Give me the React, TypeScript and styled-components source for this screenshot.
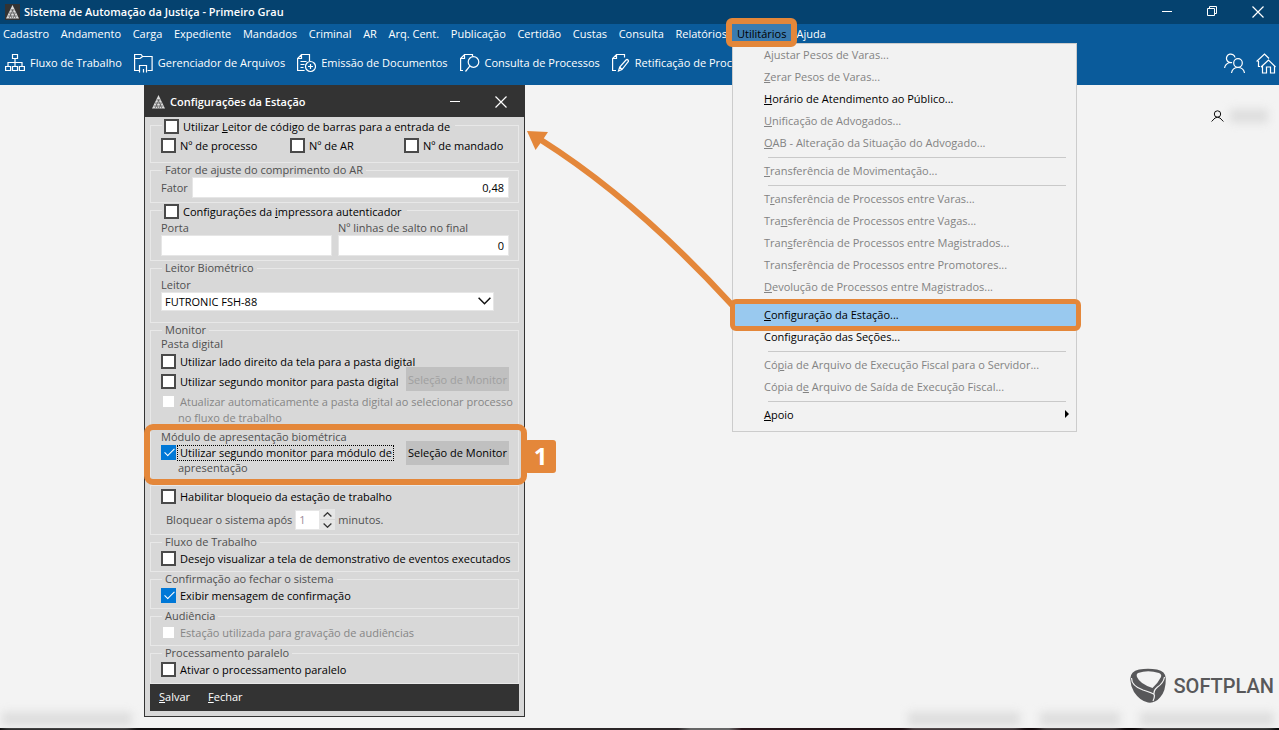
import React from "react";
import styled, { createGlobalStyle, css } from "styled-components";

const orange = "#e4873a";
const uiFont = '"Open Sans", "Noto Sans", "Liberation Sans", sans-serif';

const GlobalStyle = createGlobalStyle`
  *, *::before, *::after { box-sizing: border-box; }
  body { margin: 0; background: #f3f3f3; }
  body, button, input, select { font-family: ${uiFont}; font-size: 11px; }
`;

const Page = styled.div`
  position: relative;
  display: flex;
  flex-direction: column;
  min-height: 100vh;
  overflow: hidden;
`;

const TitleBar = styled.header`
  display: flex;
  align-items: center;
  height: 24px;
  padding: 0 15px 0 5px;
  background: #05426f;
  color: #fff;
`;

const AppTitle = styled.h1`
  flex: 1;
  margin: 0 0 0 4px;
  font-size: 11px;
  font-weight: 600;
  line-height: 16px;
`;

const WindowControls = styled.div`
  display: flex;
  align-items: center;
  gap: 35px;
`;

const IconButton = styled.button`
  display: flex;
  align-items: center;
  justify-content: center;
  padding: 0;
  border: 0;
  background: none;
  color: inherit;
`;

const MenuBar = styled.nav`
  display: flex;
  gap: 10px;
  height: 20px;
  padding-left: 3px;
  background: #0a5b9b;
`;

const MenuGroup = styled.div`
  display: flex;
  justify-content: space-between;
  width: 724px;
`;

const MenuEntry = styled.div`
  position: relative;
  display: flex;
`;

const MenuButton = styled.button<{ $open?: boolean }>`
  padding: 0;
  border: 0;
  background: none;
  color: ${(p) => (p.$open ? "#000" : "#fff")};
  line-height: 18px;
  white-space: nowrap;
`;

const OpenMark = styled.span`
  position: absolute;
  z-index: 3;
  inset: -6px -11px -3px;
  border: 6px solid ${orange};
  border-radius: 6px;
  pointer-events: none;
`;

const OpenFill = styled.span`
  position: absolute;
  inset: 0 -5px;
  background: #3b7cb0;
`;

const MenuLabel = styled.span`
  position: relative;
`;

const Toolbar = styled.div`
  display: flex;
  align-items: center;
  height: 41px;
  padding: 0 3px 3px 5px;
  background: #0a5b9b;
  color: #fff;
`;

const ToolButton = styled.button`
  display: flex;
  align-items: center;
  gap: 5px;
  margin-right: 12px;
  padding: 0;
  border: 0;
  background: none;
  color: inherit;
  line-height: 14px;
  white-space: nowrap;
`;

const ToolbarEnd = styled.div`
  display: flex;
  gap: 11px;
  margin-left: auto;
`;

const Dropdown = styled.ul`
  position: absolute;
  z-index: 2;
  top: 19px;
  left: -5px;
  width: 345px;
  margin: 0;
  padding: 0 0 5px;
  border: 1px solid #ccc;
  background: #f2f2f2;
  list-style: none;
`;

const DropdownItem = styled.li`
  position: relative;
`;

const DropdownButton = styled.button<{ $active?: boolean }>`
  display: flex;
  align-items: center;
  justify-content: space-between;
  width: 100%;
  height: 22px;
  padding: 0 7px 2px 31px;
  border: 0;
  background: ${(p) => (p.$active ? "#99c9ef" : "none")};
  color: #000;
  white-space: nowrap;
  &:disabled { color: #838383; }
`;

const ActiveFrame = styled.span`
  position: absolute;
  z-index: 1;
  inset: -5px -5px -5px -3px;
  border: 5px solid ${orange};
  border-radius: 6px;
  pointer-events: none;
`;

const Separator = styled.li`
  height: 6px;
  padding: 3px 10px 0 35px;
  &::before { content: ""; display: block; height: 1px; background: #c9c9c9; }
`;

const Desktop = styled.main`
  display: flex;
  flex: 1;
  align-items: flex-start;
  justify-content: space-between;
  padding: 0 5px 11px 144px;
`;

const Dialog = styled.section`
  width: 381px;
  border: 1px solid #333;
  border-top: 0;
  background: #d8d8d8;
  color: #000;
`;

const DialogTitle = styled.header`
  display: flex;
  align-items: center;
  height: 32px;
  padding: 1px 17px 0 6px;
  background: #333;
  color: #fff;
`;

const DialogHeading = styled.h2`
  flex: 1;
  margin: 0 0 0 4px;
  font-size: 11px;
  font-weight: 600;
  line-height: 16px;
`;

const DialogBody = styled.form`
  padding: 1px 5px 5px;
`;

const Group = styled.fieldset<{ $bottom: number; $gap?: number }>`
  min-width: 0;
  margin: ${(p) => p.$gap ?? 0}px 0 0;
  padding: 0 9px ${(p) => p.$bottom}px 10px;
  border: 1px solid #e8e8e8;
`;

const Legend = styled.legend`
  height: 14px;
  margin-left: 1px;
  padding: 0 3px;
  color: #4f4f4f;
  line-height: 14px;
`;

const CheckLegend = styled(Legend)`
  padding: 1px 5px 0 2px;
  color: #000;
`;

const CheckLabel = styled.label<{ $off?: boolean }>`
  display: flex;
  align-items: center;
  gap: 4px;
  color: ${(p) => (p.$off ? "#868686" : "#000")};
  line-height: 15px;
  white-space: nowrap;
`;

const CheckBox = styled.input.attrs({ type: "checkbox" })`
  position: relative;
  flex: none;
  width: 15px;
  height: 15px;
  margin: 0;
  appearance: none;
  border: 2px solid #4a4a4a;
  background: #fff;
  &:checked { border-color: #0078d7; background: #0078d7; }
  &:checked::after {
    content: "";
    position: absolute;
    left: 4px;
    top: -1px;
    width: 5px;
    height: 10px;
    border: solid #fff;
    border-width: 0 1px 1px 0;
    transform: rotate(45deg);
  }
  &:disabled { border-color: transparent; background-clip: padding-box; }
`;

const Row = styled.div<{ $height?: number }>`
  display: flex;
  align-items: center;
  justify-content: space-between;
  height: ${(p) => p.$height ?? 20}px;
`;

const NumberChecks = styled.div`
  display: grid;
  grid-template-columns: 129px 114px 1fr;
  padding-top: 6px;
`;

const FieldLabel = styled.label`
  color: #4f4f4f;
  line-height: 14px;
  white-space: nowrap;
`;

const fieldBox = css`
  min-width: 0;
  margin: 0;
  border: 1px solid #e6e6e6;
  border-radius: 0;
  background: #fff;
  color: #000;
`;

const TextField = styled.input.attrs({ type: "text" })`
  ${fieldBox}
  height: 21px;
  padding: 0 4px;
  text-align: right;
`;

const FactorRow = styled.div`
  display: grid;
  grid-template-columns: 31px 1fr;
  align-items: center;
`;

const PrinterFields = styled.div`
  display: grid;
  grid-template-columns: 171px 171px;
  justify-content: space-between;
  padding-top: 4px;
`;

const Stack = styled.div`
  display: flex;
  flex-direction: column;
`;

const ReaderField = styled(Stack)`
  position: relative;
  width: 333px;
  padding-top: 3px;
`;

const ReaderSelect = styled.select`
  ${fieldBox}
  height: 19px;
  padding: 0 3px;
  appearance: none;
`;

const SelectArrow = styled.svg`
  position: absolute;
  right: 3px;
  bottom: 6px;
  pointer-events: none;
`;

const SubHeading = styled.h3`
  margin: 0;
  color: #4f4f4f;
  font-size: 11px;
  font-weight: 400;
  line-height: 14px;
`;

const Note = styled.p<{ $off?: boolean }>`
  margin: 0;
  padding-left: 17px;
  color: ${(p) => (p.$off ? "#868686" : "#4f4f4f")};
  line-height: 14px;
`;

const MonitorButton = styled.button<{ $align?: string }>`
  flex: none;
  align-self: ${(p) => p.$align ?? "flex-end"};
  width: 103px;
  height: 24px;
  padding: 0;
  border: 0;
  background: #c0c0c0;
  color: #000;
  white-space: nowrap;
  &:disabled { color: #9f9f9f; }
`;

const PresentationModule = styled.div`
  position: relative;
  margin-top: 5px;
`;

const StepFrame = styled.span`
  position: absolute;
  inset: -6px -18px -10px -17px;
  border: 6px solid ${orange};
  border-radius: 9px;
  pointer-events: none;
`;

const StepBadge = styled.span`
  position: absolute;
  top: 10px;
  left: 364px;
  width: 31px;
  height: 33px;
  border-radius: 3px;
  background: ${orange};
  color: #fff;
  font-size: 24px;
  font-weight: 700;
  line-height: 32px;
  text-align: center;
`;

const FocusText = styled.span`
  margin-left: -2px;
  padding: 0 1px 0 2px;
  outline: 1px dotted #000;
  line-height: 14px;
`;

const LockRow = styled.div`
  display: flex;
  align-items: center;
  gap: 3px;
  padding: 3px 5px 0;
  color: #4f4f4f;
`;

const MinutesField = styled.input.attrs({ type: "text" })`
  ${fieldBox}
  width: 25px;
  height: 20px;
  padding: 0 3px;
  color: #9a8a9a;
`;

const Spinner = styled.div`
  display: flex;
  flex-direction: column;
  gap: 1px;
  margin-left: -3px;
`;

const SpinButton = styled.button`
  display: flex;
  align-items: center;
  justify-content: center;
  width: 15px;
  height: 10px;
  padding: 0;
  border: 0;
  background: #e6e6e6;
`;

const DialogFooter = styled.footer`
  display: flex;
  gap: 18px;
  height: 27px;
  padding: 0 9px 3px;
  background: #333;
  color: #fff;
`;

const FooterButton = styled.button`
  padding: 0;
  border: 0;
  background: none;
  color: inherit;
`;

const SideColumn = styled.aside`
  display: flex;
  flex-direction: column;
  align-items: flex-end;
  align-self: stretch;
  justify-content: space-between;
  padding-top: 24px;
`;

const UserInfo = styled.div`
  display: flex;
  align-items: center;
  gap: 6px;
  margin-right: 6px;
`;

const Smudge = styled.span<{ $width: number }>`
  width: ${(p) => p.$width}px;
  height: 14px;
  background: #dedede;
  filter: blur(4px);
`;

const Brand = styled.div`
  display: flex;
  align-items: center;
  gap: 8px;
  margin-bottom: 13px;
  color: #58585a;
`;

const BrandName = styled.span`
  font-family: Roboto, "Liberation Sans", sans-serif;
  font-size: 20px;
  font-weight: 500;
  line-height: 36px;
`;

const StatusBar = styled.div`
  position: absolute;
  right: 5px;
  bottom: 4px;
  left: 2px;
  display: flex;
  gap: 20px;
`;

const StatusSpacer = styled.span`
  flex: 1;
`;

const TaskStrip = styled.div`
  height: 2px;
  background: linear-gradient(90deg, #000, #2b2628 30%, #2b2628 53%, #666 54%, #666 57%, #2a161b 58%, #000);
`;

const ArrowOverlay = styled.svg`
  position: absolute;
  top: 125px;
  left: 520px;
  pointer-events: none;
`;

/* Renders a label whose access key, the letter after "&", is underlined. */
function Mnemonic({ text }: { text: string }) {
  const at = text.indexOf("&");
  if (at < 0) return <span>{text}</span>;
  return (
    <span>
      {text.slice(0, at)}
      <u>{text[at + 1]}</u>
      {text.slice(at + 2)}
    </span>
  );
}

function JusticeMark() {
  return (
    <svg width="15" height="16" viewBox="0 0 15 16">
      <rect width="15" height="16" fill="#333" />
      <path d="M7.5 1L14 14.500H1z" fill="#dedede" />
      <path d="M2.500 12h10M4 9h7M5.500 6h4M4 14.500l4-9M8 14.500l2-5M11 14.500L7 5.500M7 14.500l-2-5" stroke="#555" strokeWidth=".7" fill="none" />
    </svg>
  );
}

const line = { fill: "none", stroke: "currentColor", strokeWidth: 1.2 };

const Minimize = () => (
  <svg width="10" height="10" {...line} strokeWidth={1}><path d="M0 4.500h10" /></svg>
);
const Restore = () => (
  <svg width="10" height="16" {...line} strokeWidth={1}><path d="M.5 4.500h7v7h-7zM2.500 4.500v-2h7v7h-2" /></svg>
);
const Close = () => (
  <svg width="12" height="12" {...line}><path d="M.5.5l11 11M11.5.5l-11 11" /></svg>
);

const FlowIcon = () => (
  <svg width="20" height="20" {...line}>
    <path d="M7.5 1.5h5v4h-5zM.6 13.5h5v4h-5zM7.5 13.5h5v4h-5zM14.4 13.5h5v4h-5zM10 5.5v8M3 13.5v-4h14v4" />
  </svg>
);
const FolderIcon = () => (
  <svg width="19" height="20" {...line}>
    <path d="M5 17.500H.6v-16h6.500l1.500 2h9.500v14h-4.500M.6 5.500h5.500l2.500-2M5.500 19.500v-7h7v7M9.500 16v3.500" />
  </svg>
);
const IssueIcon = () => (
  <svg width="19" height="20" {...line}>
    <path d="M12.500 8V1.500H4.500L.6 5.500v12h7M4.500 1.500v4H.6M3.500 8.500h6M3.500 11.500h4M3.500 14.500h3M13.500 11v5M11 13.500h5" />
    <circle cx="13.500" cy="13.500" r="5" />
  </svg>
);
const SearchDocIcon = () => (
  <svg width="20" height="20" {...line}>
    <path d="M3 17.500H.6v-12L4.500 1.500h8v2M4.500 1.500v4H.6M9.800 13.200L5.500 18.500" />
    <circle cx="13.500" cy="9" r="5.300" />
  </svg>
);
const EditDocIcon = () => (
  <svg width="18" height="20" {...line}>
    <path d="M4 17.500H.6v-12L4.500 1.500h8v3M4.500 1.500v4H.6M6.500 18l1.200-4 6.300-7q1-1 2 0t0 2l-6 7.500zM7.700 14l2.300 2.500" />
  </svg>
);
const PeopleIcon = () => (
  <svg width="21" height="21" {...line}>
    <circle cx="14" cy="10" r="4.300" />
    <path d="M7.500 20q1-5.500 6.500-5.500t6.500 5.500M8 9.500A4.300 4.300 0 1 1 11 4.500M.6 15q.5-4 5-5.500h2.500" />
  </svg>
);
const HomesIcon = () => (
  <svg width="20" height="21" {...line}>
    <path d="M4 13.500H2.500V8M.6 8.500L8.500 1l4.500 4.500M5 14l7.500-7 7 7M6.500 13v7h4v-6h4v6h4v-7" />
  </svg>
);
const UserIcon = () => (
  <svg width="13" height="12" {...line} stroke="#111" strokeWidth={1}>
    <circle cx="6.500" cy="4" r="3.200" />
    <path d="M.6 11.500L4 8q2.500-1.500 5 0l3.400 3.500" />
  </svg>
);

const BrandMark = () => (
  <svg width="36" height="36" viewBox="0 0 36 36">
    <path d="M9 1.500Q18 0 27 1.500q8.500 1.500 8.800 9Q36 23 30 29.500 25 35.500 18 34.500 10 33 4 24 .5 18 .2 11 .5 3 9 1.500z" fill="#58585a" />
    <path d="M8 5q10-3.500 21 0 3 1.500 2 4-3 6-8.500 11Q10 16 7 9q-1-3 1-4z" fill="#f3f3f3" />
    <path d="M1.500 10q0 8 11.500 12 10 3 11.500 5 0 3-1.500 6M34.500 9q-1 6-7 10-5 4-3 9" fill="none" stroke="#f3f3f3" strokeWidth="1.200" />
  </svg>
);

const menusBefore = [
  "Cadastro", "Andamento", "Carga", "Expediente", "Mandados", "Criminal", "AR",
  "Arq. Cent.", "Publicação", "Certidão", "Custas", "Consulta", "Relatórios",
];

const tools = [
  { label: "Fluxo de Trabalho", Icon: FlowIcon },
  { label: "Gerenciador de Arquivos", Icon: FolderIcon },
  { label: "Emissão de Documentos", Icon: IssueIcon },
  { label: "Consulta de Processos", Icon: SearchDocIcon },
  { label: "Retificação de Processos", Icon: EditDocIcon },
];

type Entry = { label: string; on?: boolean; active?: boolean; sub?: boolean } | null;

const utilities: Entry[] = [
  { label: "A&justar Pesos de Varas..." },
  { label: "&Zerar Pesos de Varas..." },
  { label: "&Horário de Atendimento ao Público...", on: true },
  { label: "&Unificação de Advogados..." },
  { label: "&OAB - Alteração da Situação do Advogado..." },
  null,
  { label: "&Transferência de Movimentação..." },
  null,
  { label: "T&ransferência de Processos entre Varas..." },
  { label: "Tra&nsferência de Processos entre Vagas..." },
  { label: "Tran&sferência de Processos entre Magistrados..." },
  { label: "Trans&ferência de Processos entre Promotores..." },
  { label: "&Devolução de Processos entre Magistrados..." },
  null,
  { label: "&Configuração da Estação...", on: true, active: true },
  { label: "Conf&iguração das Seções...", on: true },
  null,
  { label: "Có&pia de Arquivo de Execução Fiscal para o Servidor..." },
  { label: "Cópia d&e Arquivo de Saída de Execução Fiscal..." },
  null,
  { label: "&Apoio", on: true, sub: true },
];

function Check({ label, checked, off }: { label: string; checked?: boolean; off?: boolean }) {
  return (
    <CheckLabel $off={off}>
      <CheckBox defaultChecked={checked} disabled={off} />
      <Mnemonic text={label} />
    </CheckLabel>
  );
}

function UtilitiesMenu() {
  return (
    <Dropdown>
      {utilities.map((entry, i) =>
        entry ? (
          <DropdownItem key={i}>
            <DropdownButton disabled={!entry.on} $active={entry.active}>
              <Mnemonic text={entry.label} />
              {entry.sub && (
                <svg width="4" height="8"><path d="M0 0l4 4-4 4z" fill="#000" /></svg>
              )}
            </DropdownButton>
            {entry.active && <ActiveFrame />}
          </DropdownItem>
        ) : (
          <Separator key={i} />
        ),
      )}
    </Dropdown>
  );
}

function StationDialog() {
  return (
    <Dialog>
      <DialogTitle>
        <JusticeMark />
        <DialogHeading>Configurações da Estação</DialogHeading>
        <WindowControls>
          <IconButton aria-label="Minimizar"><Minimize /></IconButton>
          <IconButton aria-label="Fechar janela"><Close /></IconButton>
        </WindowControls>
      </DialogTitle>
      <DialogBody onSubmit={(e) => e.preventDefault()}>
        <Group $bottom={9}>
          <CheckLegend>
            <Check label="Utilizar &Leitor de código de barras para a entrada de" />
          </CheckLegend>
          <NumberChecks>
            <Check label="Nº de processo" />
            <Check label="Nº de AR" />
            <Check label="Nº de mandado" />
          </NumberChecks>
        </Group>
        <Group $bottom={4}>
          <Legend>Fator de ajuste do comprimento do AR</Legend>
          <FactorRow>
            <FieldLabel htmlFor="fator">Fator</FieldLabel>
            <TextField id="fator" defaultValue="0,48" />
          </FactorRow>
        </Group>
        <Group $bottom={4}>
          <CheckLegend>
            <Check label="Configurações da &impressora autenticador" />
          </CheckLegend>
          <PrinterFields>
            <Stack>
              <FieldLabel htmlFor="porta">Porta</FieldLabel>
              <TextField id="porta" />
            </Stack>
            <Stack>
              <FieldLabel htmlFor="linhas">Nº linhas de salto no final</FieldLabel>
              <TextField id="linhas" defaultValue="0" />
            </Stack>
          </PrinterFields>
        </Group>
        <Group $bottom={11}>
          <Legend>Leitor Biométrico</Legend>
          <ReaderField>
            <FieldLabel htmlFor="leitor">Leitor</FieldLabel>
            <ReaderSelect id="leitor"><option>FUTRONIC FSH-88</option></ReaderSelect>
            <SelectArrow width="13" height="8" {...line} stroke="#111" strokeWidth={1.5}>
              <path d="M.6.8l5.900 6 5.900-6" />
            </SelectArrow>
          </ReaderField>
        </Group>
        <Group $bottom={5}>
          <Legend>Monitor</Legend>
          <SubHeading>Pasta digital</SubHeading>
          <Row><Check label="Utilizar lado direito da tela para a pasta digital" /></Row>
          <Row>
            <Check label="Utilizar segundo monitor para pasta digital" />
            <MonitorButton type="button" disabled>Seleção de Monitor</MonitorButton>
          </Row>
          <Row>
            <Check off label="Atualizar automaticamente a pasta digital ao selecionar processo" />
          </Row>
          <Note $off>no fluxo de trabalho</Note>
          <PresentationModule>
            <SubHeading>Módulo de apresentação biométrica</SubHeading>
            <Row $height={17}>
              <CheckLabel>
                <CheckBox defaultChecked />
                <FocusText>Utilizar segundo monitor para módulo de</FocusText>
              </CheckLabel>
              <MonitorButton type="button" $align="center">Seleção de Monitor</MonitorButton>
            </Row>
            <Note>apresentação</Note>
            <StepBadge>1</StepBadge>
            <StepFrame />
          </PresentationModule>
        </Group>
        <Group $bottom={4} $gap={4}>
          <Row><Check label="Habilitar bloqueio da estação de trabalho" /></Row>
          <LockRow>
            <FieldLabel htmlFor="minutos">Bloquear o sistema após</FieldLabel>
            <MinutesField id="minutos" defaultValue="1" disabled />
            <Spinner>
              <SpinButton type="button" aria-label="Aumentar">
                <svg width="9" height="5" {...line} stroke="#333"><path d="M.6 4.500l3.900-3.800 3.900 3.800" /></svg>
              </SpinButton>
              <SpinButton type="button" aria-label="Diminuir">
                <svg width="9" height="5" {...line} stroke="#333"><path d="M.6.5l3.900 3.800L8.400.5" /></svg>
              </SpinButton>
            </Spinner>
            <span>minutos.</span>
          </LockRow>
        </Group>
        <Group $bottom={4}>
          <Legend>Fluxo de Trabalho</Legend>
          <Row $height={18}><Check label="Desejo visualizar a tela de demonstrativo de eventos executados" /></Row>
        </Group>
        <Group $bottom={4}>
          <Legend>Confirmação ao fechar o sistema</Legend>
          <Row $height={18}><Check checked label="Exibir mensagem de confirmação" /></Row>
        </Group>
        <Group $bottom={4}>
          <Legend>Audiência</Legend>
          <Row $height={18}><Check off label="Estação utilizada para gravação de audiências" /></Row>
        </Group>
        <Group $bottom={5}>
          <Legend>Processamento paralelo</Legend>
          <Row $height={18}><Check label="Ativar o processamento paralelo" /></Row>
        </Group>
        <DialogFooter>
          <FooterButton type="submit"><Mnemonic text="&Salvar" /></FooterButton>
          <FooterButton type="button"><Mnemonic text="&Fechar" /></FooterButton>
        </DialogFooter>
      </DialogBody>
    </Dialog>
  );
}

export default function App() {
  return (
    <Page>
      <GlobalStyle />
      <TitleBar>
        <JusticeMark />
        <AppTitle>Sistema de Automação da Justiça - Primeiro Grau</AppTitle>
        <WindowControls>
          <IconButton aria-label="Minimizar"><Minimize /></IconButton>
          <IconButton aria-label="Restaurar"><Restore /></IconButton>
          <IconButton aria-label="Fechar janela"><Close /></IconButton>
        </WindowControls>
      </TitleBar>
      <MenuBar>
        <MenuGroup>
          {menusBefore.map((name) => (
            <MenuButton key={name}>{name}</MenuButton>
          ))}
        </MenuGroup>
        <MenuEntry>
          <OpenFill />
          <MenuButton $open><MenuLabel>Utilitários</MenuLabel></MenuButton>
          <OpenMark />
          <UtilitiesMenu />
        </MenuEntry>
        <MenuButton>Ajuda</MenuButton>
      </MenuBar>
      <Toolbar>
        {tools.map(({ label, Icon }) => (
          <ToolButton key={label}><Icon />{label}</ToolButton>
        ))}
        <ToolbarEnd>
          <IconButton aria-label="Usuários"><PeopleIcon /></IconButton>
          <IconButton aria-label="Início"><HomesIcon /></IconButton>
        </ToolbarEnd>
      </Toolbar>
      <Desktop>
        <StationDialog />
        <SideColumn>
          <UserInfo><UserIcon /><Smudge $width={38} /></UserInfo>
          <Brand><BrandMark /><BrandName>SOFTPLAN</BrandName></Brand>
        </SideColumn>
      </Desktop>
      <StatusBar>
        <Smudge $width={130} />
        <StatusSpacer />
        <Smudge $width={112} />
        <Smudge $width={80} />
        <Smudge $width={134} />
      </StatusBar>
      <TaskStrip />
      <ArrowOverlay width="220" height="190" viewBox="520 125 220 190">
        <path d="M733 306Q636 200 541 140" fill="none" stroke={orange} strokeWidth="6" />
        <path d="M527 131l21 1-6 9-6.500 9z" fill={orange} />
      </ArrowOverlay>
    </Page>
  );
}
